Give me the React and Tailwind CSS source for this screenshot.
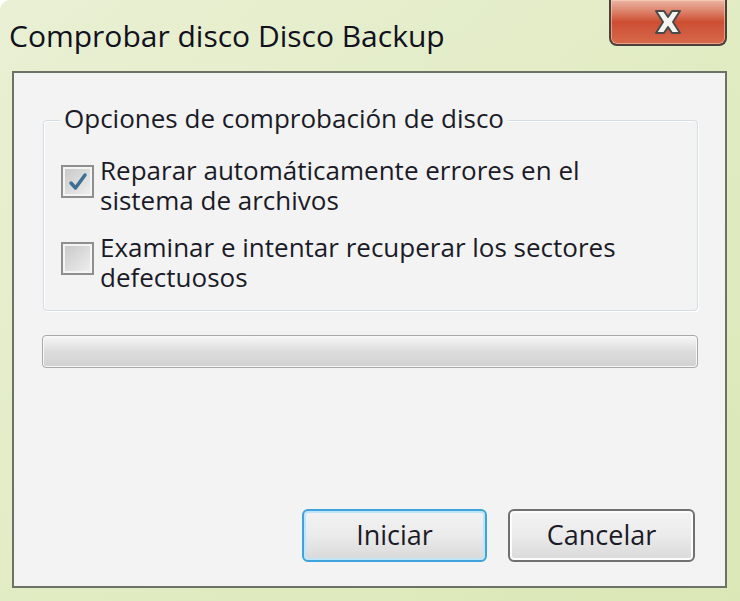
import React from 'react';

const ui = { fontFamily: '"Open Sans", "Noto Sans", sans-serif' };

const CloseButton = () => (
  <button className="w-[118px] h-[46px] mr-[13px] rounded-b-[8px] border-2 border-t-0 border-[#4b403c] bg-gradient-to-b from-[#eab5a4] via-[#cc4e32] to-[#d8694c] flex items-center justify-center shadow-[inset_0_0_0_1px_rgba(255,220,200,0.5)]">
    <svg width="40" height="30" viewBox="0 0 40 30">
      <path d="M8 4 L16 4 L20 10 L24 4 L32 4 L25 15 L32 26 L24 26 L20 20 L16 26 L8 26 L15 15 Z" fill="#f4f4f0" stroke="#4a4a48" strokeWidth="2" strokeLinejoin="round" />
    </svg>
  </button>
);

const CheckBox = ({ checked }) => (
  <div className="w-[33px] h-[33px] shrink-0 border-2 border-[#8e8f8f] bg-[#f4f4f4] p-[2px]">
    <div className="w-full h-full bg-gradient-to-br from-[#c9c9c9] to-[#eeeeee] flex items-center justify-center">
      {checked && (
        <svg width="22" height="20" viewBox="0 0 22 20">
          <path d="M4 11 L8.5 16 L18 3" fill="none" stroke="#3f6f92" strokeWidth="3.5" strokeLinecap="round" strokeLinejoin="round" />
        </svg>
      )}
    </div>
  </div>
);

const Option = ({ checked, lines }) => (
  <div className="flex items-start gap-[6px]">
    <div className="pt-[10px]">
      <CheckBox checked={checked} />
    </div>
    <div className="text-[26px] leading-[30px] text-[#1b1b28]">
      {lines.map((l) => (
        <div key={l}>{l}</div>
      ))}
    </div>
  </div>
);

export default function App() {
  return (
    <div
      className="w-[740px] h-[601px] overflow-hidden flex flex-col bg-gradient-to-br from-[#e9f0d4] via-[#e2ecc4] to-[#dbe7b6] rounded-tl-[10px]"
      style={ui}
    >
      <div className="h-[71px] shrink-0 flex items-start justify-between">
        <div className="pl-[9px] pt-[18px] text-[30px] leading-[36px] text-[#111120]">Comprobar disco Disco Backup</div>
        <CloseButton />
      </div>

      <div className="flex-1 ml-[12px] mr-[13px] mb-[13px] border-2 border-[#6b7266] bg-[#f3f3f3] flex flex-col pl-[29px] pr-[27px] pt-[47px] pb-[24px]">
        <div className="relative h-[191px] border border-[#d3dde3] rounded-[4px] shadow-[inset_1px_1px_0_#ffffff,1px_1px_0_#ffffff] pl-[17px] pt-[34px] flex flex-col gap-[17px]">
          <div className="absolute left-[16px] -top-[20px] px-[4px] bg-[#f3f3f3] text-[26px] leading-[34px] text-[#1b1b28]">
            Opciones de comprobación de disco
          </div>
          <Option checked lines={['Reparar automáticamente errores en el', 'sistema de archivos']} />
          <Option lines={['Examinar e intentar recuperar los sectores', 'defectuosos']} />
        </div>

        <div className="mt-[24px] ml-[-1px] h-[33px] rounded-[4px] border border-[#a9a9a9] shadow-[inset_0_0_0_1px_#f8f8f8] bg-gradient-to-b from-[#f7f7f7] via-[#dcdcdc] to-[#d2d2d2]" />

        <div className="flex-1" />

        <div className="flex justify-end gap-[21px] pr-[3px]">
          <button className="w-[185px] h-[53px] rounded-[6px] border-2 border-[#3ea2dc] bg-gradient-to-b from-[#f3f3f3] via-[#ebebeb] to-[#d9d9d9] shadow-[inset_0_0_0_2px_#bfe6f8] text-[27px] text-[#1b1b28]">
            Iniciar
          </button>
          <button className="w-[187px] h-[53px] rounded-[6px] border-2 border-[#707070] bg-gradient-to-b from-[#f3f3f3] via-[#ebebeb] to-[#d9d9d9] shadow-[inset_0_0_0_2px_#fcfcfc] text-[27px] text-[#1b1b28]">
            Cancelar
          </button>
        </div>
      </div>
    </div>
  );
}
